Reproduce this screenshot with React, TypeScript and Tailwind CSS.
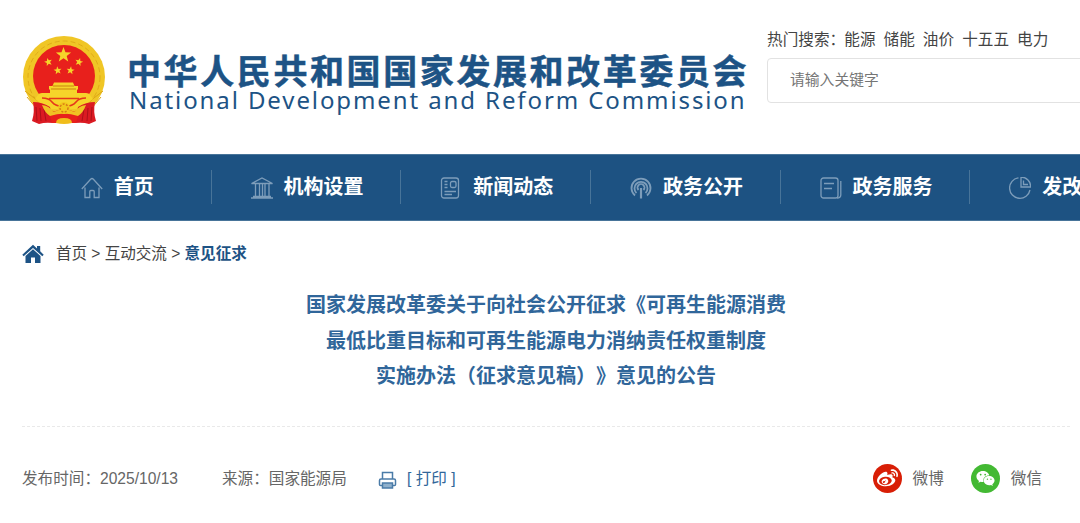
import React from 'react';
import { FaWeibo, FaWeixin } from 'react-icons/fa';

const star = (cx: number, cy: number, r: number, rot = 0) =>
  Array.from({ length: 10 }, (_, i) => {
    const a = ((i * 36 - 90 + rot) * Math.PI) / 180;
    const d = i % 2 ? r * 0.42 : r;
    return `${(cx + d * Math.cos(a)).toFixed(2)},${(cy + d * Math.sin(a)).toFixed(2)}`;
  }).join(' ');

function Emblem() {
  return (
    <svg width="84" height="90" viewBox="0 0 84 90" className="shrink-0">
      <circle cx="42" cy="42" r="41" fill="#f0c626" />
      <circle cx="42" cy="42" r="36" fill="none" stroke="#e0ab18" strokeWidth="1" strokeDasharray="5 3" />
      <path d="M3 56 16 66M5 62l10 12M81 56 68 66M79 62 69 74" stroke="#dca516" strokeWidth="1" />
      <circle cx="42" cy="41" r="31" fill="#e8201c" />
      <g fill="#f6d42a">
        <polygon points={star(41.5, 20, 8)} />
        <polygon points={star(26.3, 27, 4.2, -15)} />
        <polygon points={star(57, 27, 4.2, 15)} />
        <polygon points={star(35.7, 35.500, 4.2, -8)} />
        <polygon points={star(48.5, 35.500, 4.2, 8)} />
        <path d="M32 47.500h19l1.500 3.500H56v3l-1 1v4H28v-4l-1-1v-3h3.500z" />
        <path d="M16 60q1-2 4-2h44q3 0 4 2l3 4q-8 6-14 10H27q-6-4-14-10z" />
      </g>
      <path d="M31 51h21M29 54h25" stroke="#c9830f" strokeWidth="1" />
      <path d="M20 63q7 0 10 4t12 5q9-1 12-5t10-4M27 63.500h30" fill="none" stroke="#e5381b" strokeWidth="1.600" />
      <path d="M11 67q9 0 17 5l3 16q-8-1-14 1l-7-3q3-9 1-19z" fill="#db1a22" />
      <path d="M73 67q-9 0-17 5l-3 16q8-1 14 1l7-3q-3-9-1-19z" fill="#db1a22" />
      <path d="M14 72l1 14M18 73l1 13M22 74l2 12M70 72l-1 14M66 73l-1 13M62 74l-2 12" stroke="#ad1019" strokeWidth="1" />
      <path d="M27 78q15-6 30 0l-3 10H30z" fill="#e8201c" />
      <path d="M20 70q8 1 11 7 11-5 22 0 3-6 11-7-3 8-8 11-14-5-28 0-5-3-8-11z" fill="#f0c223" />
      <circle cx="42" cy="73" r="6" fill="#f3c81c" />
      <circle cx="42" cy="73" r="4" fill="none" stroke="#d97b16" strokeWidth="1.500" strokeDasharray="2 1.400" />
      <path d="M34 88q0-5 8-5t8 5q-8 2-16 0z" fill="#f0bd1b" />
    </svg>
  );
}

const icons: Record<string, React.ReactNode> = {
  home: <path d="M.8 12 9.6 2.200Q11 .900 12.400 2.200L21.200 12M4 10.500V20.500h4.800v-6q0-1 1-1h2.400q1 0 1 1v6H18v-10" />,
  bank: <path d="M.5 6.500 11 1l10.500 5.500zM0 21h22M2 19.500h18M4.500 7v12.500M8.500 7v12.500M11.500 7v12.500M14 7v12.500M18 7v12.500" />,
  news: (
    <>
      <rect x="1.500" y="1" width="17" height="20" rx="2.500" />
      <rect x="10.500" y="4.500" width="5.500" height="6" rx="1.500" />
      <path d="M4.500 4.500h3M4.500 7.500h3M4.500 10.500h3M4.500 14.500h11.500M4.500 17.500h7.500" />
    </>
  ),
  signal: (
    <>
      <path d="M5 18.500a9.500 9.500 0 1 1 12 0M6.500 16a6.500 6.500 0 1 1 9 0M8.500 13a3.500 3.500 0 1 1 5 0" strokeWidth="1.800" />
      <path d="M11 11v10.500" strokeWidth="2.200" />
    </>
  ),
  doc: (
    <>
      <rect x="1" y="1" width="17" height="20" rx="2.500" />
      <path d="M4 6.500h10M4 11.500h8M17 21q3.800 0 3.800-3V4" />
    </>
  ),
  pie: (
    <>
      <path d="M9.500 .800A10.300 10.300 0 1 0 21 13" />
      <path d="M12 0V10h9.700A9.700 9.700 0 0 0 12 0zM14.500 3.500v4H19" />
    </>
  ),
};

const navItems = [
  { icon: 'home', label: '首页' },
  { icon: 'bank', label: '机构设置' },
  { icon: 'news', label: '新闻动态' },
  { icon: 'signal', label: '政务公开' },
  { icon: 'doc', label: '政务服务' },
  { icon: 'pie', label: '发改数据' },
];

const hotWords = ['能源', '储能', '油价', '十五五', '电力'];

export default function App() {
  return (
    <div className="h-[523px] w-[1080px] overflow-hidden bg-white font-['Liberation_Sans','Noto_Sans_CJK_SC',sans-serif] text-[15.6px] text-[#444] [text-spacing-trim:space-all]">
      <header className="flex h-[154px] pt-[35px] pl-[22px]">
        <Emblem />
        <div className="w-[661px] shrink-0 pt-4 pl-[21px] whitespace-nowrap text-[#1d5385]">
          <h1 className="h-[38px] font-['Noto_Sans_CJK_SC',sans-serif] text-[34px] leading-[38px] font-bold tracking-[2.6px] [-webkit-text-stroke:0.5px_#1d5385]">
            中华人民共和国国家发展和改革委员会
          </h1>
          <p className="pl-[2px] font-['Noto_Sans',sans-serif] text-[24px] leading-[22px] tracking-[1.9px]">
            National Development and Reform Commission
          </p>
        </div>
        <div className="shrink-0 whitespace-nowrap">
          <div className="-mt-3.5 flex h-[37px] items-center gap-2 tracking-[0.05px]">
            <span className="-mr-[9px]">热门搜索：</span>
            {hotWords.map((word) => (
              <span key={word}>{word}</span>
            ))}
          </div>
          <div className="flex h-[45px] w-[360px] items-center rounded border border-[#e2e2e2] pb-px pl-[22px] text-[14.8px] text-[#757575]">
            请输入关键字
          </div>
        </div>
      </header>

      <nav className="flex h-[67px] border-y border-[#487499] bg-[#1d5282] pl-[22px]">
        {navItems.map((item) => (
          <div key={item.label} className="flex w-[189.7px] shrink-0 items-center">
            <a className="flex grow items-center justify-center gap-[11px] pl-0.5 text-[20px] font-bold whitespace-nowrap text-white">
              <svg width="22" height="22" viewBox="0 0 22 22" fill="none" stroke="#7d9dba" strokeWidth="1.300">
                {icons[item.icon]}
              </svg>
              <span className="-mt-0.5">{item.label}</span>
            </a>
            <i className="-mt-0.5 h-[34px] w-px bg-[#487499]" />
          </div>
        ))}
      </nav>

      <main className="pr-[10px] pl-[22px]">
        <div className="flex h-[65px] items-center whitespace-pre">
          <svg width="22" height="20" viewBox="0 0 22 20" fill="#1d5385" className="mr-3">
            <path d="M11 .800 15 4.500V2h3.200v5.300l3.500 3.400-1.400 1.500L11 3.900l-9.300 8.300-1.400-1.500z" />
            <path d="m11 5.300 7.500 6.700V19H13v-5.500H9V19H3.500v-7z" />
          </svg>
          <span className="tracking-[-0.05px]">首页 &gt; 互动交流 &gt; </span>
          <span className="font-bold text-[#1d5385]">意见征求</span>
        </div>

        <h2 className="h-[141px] border-b border-dashed border-[#e9e9e9] pt-0.5 text-center text-[20px] leading-[35.5px] font-bold text-[#30669a]">
          国家发展改革委关于向社会公开征求《可再生能源消费
          <br />
          最低比重目标和可再生能源电力消纳责任权重制度
          <br />
          实施办法（征求意见稿）》意见的公告
        </h2>

        <div className="flex h-[103px] items-center whitespace-nowrap text-[#666]">
          <span className="w-[200px]">发布时间：2025/10/13</span>
          <span className="w-[156px]">来源：国家能源局</span>
          <svg width="19" height="18" viewBox="0 0 19 18" fill="none" stroke="#4a7ba8" strokeWidth="1.500" className="mt-0.5 mr-2.5">
            <path d="M4.500 8V1.500h10V8M4.500 14.500H2.500q-1 0-1-1V9.500q0-1.500 1.500-1.500h13q1.500 0 1.500 1.500v4q0 1-1 1h-2" />
            <rect x="4.500" y="12" width="10" height="5" fill="#8fb0cc" />
          </svg>
          <span className="text-[#30669a]">[ 打印 ]</span>
          <div className="ml-auto flex items-center pr-7">
            <span className="mr-[11px] flex size-[29px] items-center justify-center rounded-full bg-[#d81e06] text-white">
              <FaWeibo size={21} />
            </span>
            <span className="mr-[27px]">微博</span>
            <span className="mr-[11px] flex size-[29px] items-center justify-center rounded-full bg-[#43b933] text-white">
              <FaWeixin size={19} />
            </span>
            <span>微信</span>
          </div>
        </div>
      </main>
    </div>
  );
}
